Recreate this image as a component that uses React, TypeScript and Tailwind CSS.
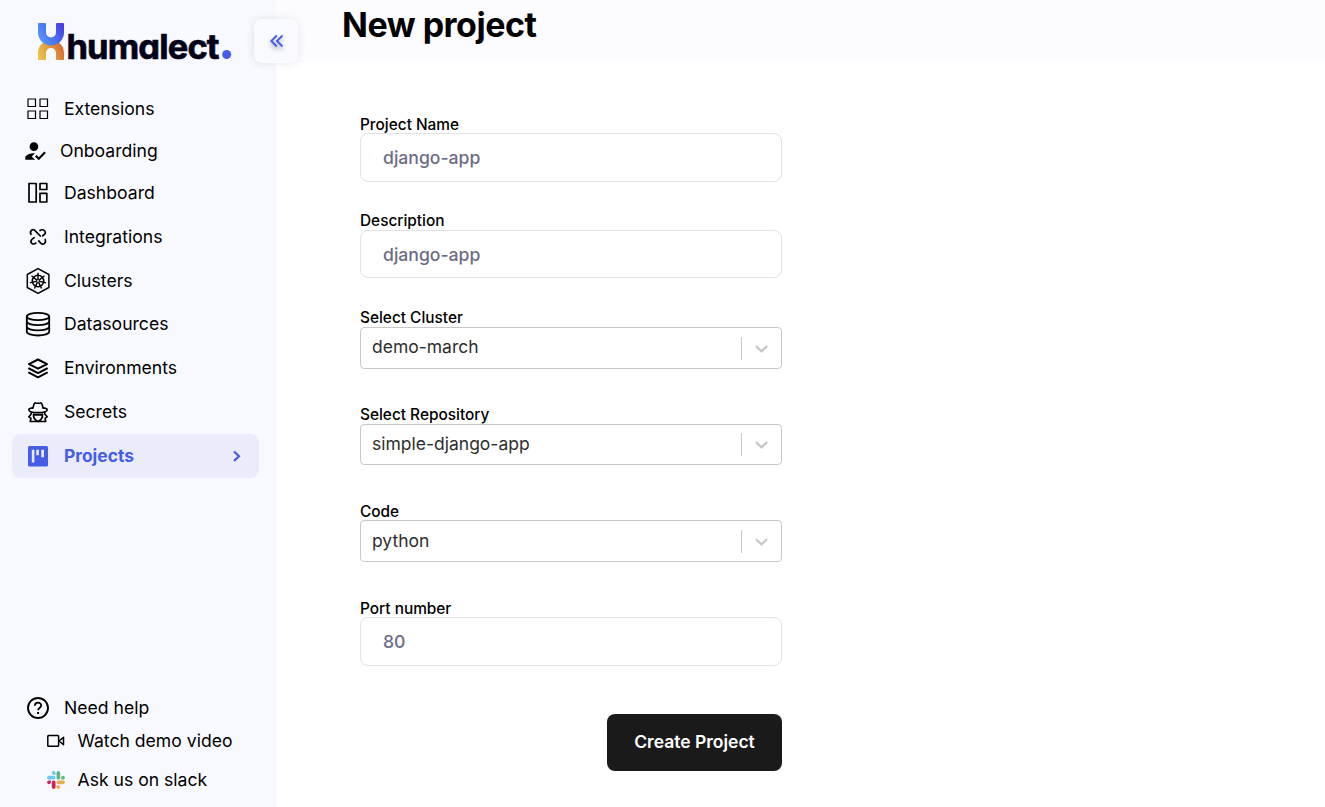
import React from "react";
import { MdHowToReg } from "react-icons/md";

type IconProps = { className?: string };

function Logo() {
  return (
    <svg width="196" height="50" viewBox="0 0 196 50" className="shrink-0 overflow-visible" aria-label="humalect">
      <defs>
        <linearGradient id="top" x1="2" y1="20" x2="28" y2="4" gradientUnits="userSpaceOnUse">
          <stop offset="0" stopColor="#5b9cf4" />
          <stop offset="0.5" stopColor="#4a72f0" />
          <stop offset="1" stopColor="#4a35e0" />
        </linearGradient>
        <linearGradient id="bottom" x1="2" y1="38" x2="28" y2="26" gradientUnits="userSpaceOnUse">
          <stop offset="0" stopColor="#edc94a" />
          <stop offset="0.5" stopColor="#e29a45" />
          <stop offset="1" stopColor="#d8682f" />
        </linearGradient>
      </defs>
      <path d="M2 38V32a13 13 0 0 1 26 0v6q0 1-1 1h-6q-1 0-1-1v-6a5 5 0 0 0-10 0v6q0 1-1 1H3q-1 0-1-1Z" fill="url(#bottom)" />
      <path d="M2 3q0-1 1-1h6q1 0 1 1v8.500a5 5 0 0 0 10 0V3q0-1 1-1h6q1 0 1 1v8.500a13 13 0 0 1-26 0Z" fill="url(#top)" />
      <text
        x="30.500"
        y="37.500"
        textLength="153"
        lengthAdjust="spacing"
        fill="#04031a"
        stroke="#04031a"
        strokeWidth="0.7"
        className="font-['Inter',sans-serif] text-[34.5px] font-bold [font-feature-settings:'cv11'_1]"
      >
        humalect
      </text>
      <circle cx="190.700" cy="33.500" r="4.500" fill="#465de8" />
    </svg>
  );
}

function Svg({ size = 24, children, className }: { size?: number; children: React.ReactNode; className?: string }) {
  return (
    <svg width={size} height={size} viewBox="0 0 24 24" fill="none" stroke="currentColor" className={className}>
      {children}
    </svg>
  );
}

function GridIcon({ className }: IconProps) {
  return (
    <Svg className={className}>
      <path strokeWidth="1.200" d="M2 2h7.500v7.500H2zM14 2h7.500v7.500H14zM2 14h7.500v7.500H2zM14 14h7.500v7.500H14z" />
    </Svg>
  );
}

function DashboardIcon({ className }: IconProps) {
  return (
    <Svg className={className}>
      <g strokeWidth="1.700" strokeLinejoin="round">
        <rect x="3" y="2.500" width="7.200" height="18.500" />
        <rect x="14" y="2.500" width="6.800" height="6" />
        <path d="M14 12.300h6.800V21H14z" />
      </g>
    </Svg>
  );
}

function IntegrationsIcon({ className }: IconProps) {
  return (
    <Svg className={className}>
      <g strokeWidth="1.700" strokeLinecap="round" strokeLinejoin="round">
        <path d="M5 9.300C3.200 6 6.800 3.100 9 5.600L14.300 11" />
        <path d="M14 5.500c2-1.500 5.500-.5 5.300 2.300-.2 1.600-1.400 2.200-2.700 3.100" />
        <path d="M8.200 12.600C6.300 13.800 4.700 15 4.900 16.800c.3 2.200 3.200 3 5 1.200" />
        <path d="M19.200 14.500c1.300 3-1.600 5.800-4.200 3.800l-2.300-2.500" />
      </g>
    </Svg>
  );
}

const SPOKES = [0, 1, 2, 3, 4, 5, 6].map((i) => {
  const a = (i * 2 * Math.PI) / 7 - Math.PI / 2;
  return { x1: 14 + 1.8 * Math.cos(a), y1: 14 + 1.8 * Math.sin(a), x2: 14 + 8.3 * Math.cos(a), y2: 14 + 8.3 * Math.sin(a) };
});

function ClusterIcon({ className }: IconProps) {
  return (
    <svg width="28" height="28" viewBox="0 0 28 28" fill="none" stroke="currentColor" className={className}>
      <path strokeWidth="1.500" strokeLinejoin="round" d="M14 1.600 24.900 7.500v13L14 26.400 3.300 20.500v-13Z" />
      <circle cx="14" cy="14" r="5.700" strokeWidth="1.600" />
      <circle cx="14" cy="14" r="1.500" strokeWidth="1.100" />
      {SPOKES.map((s, i) => (
        <line key={i} {...s} strokeWidth="1.400" />
      ))}
    </svg>
  );
}

function DatabaseIcon({ className }: IconProps) {
  return (
    <svg width="26" height="26" viewBox="0 0 26 26" fill="none" stroke="currentColor" className={className}>
      <g strokeWidth="1.800">
        <ellipse cx="13" cy="5.500" rx="11.200" ry="3.700" />
        <path d="M1.800 5.500v15.300c0 2 5 3.700 11.200 3.700s11.200-1.700 11.200-3.700V5.500" />
        <path d="M1.800 10.500c0 2 5 3.700 11.200 3.700s11.200-1.700 11.200-3.700M1.800 15.700c0 2 5 3.700 11.200 3.700s11.200-1.700 11.200-3.700" />
      </g>
    </svg>
  );
}

function LayersIcon({ className }: IconProps) {
  return (
    <Svg className={className}>
      <g strokeWidth="2" strokeLinejoin="round" strokeLinecap="round">
        <path d="m12 3.500 9 4.600-9 4.600-9-4.600Z" />
        <path d="m3 12.500 9 4.600 9-4.600" />
        <path d="m3 16.700 9 4.600 9-4.600" />
      </g>
    </Svg>
  );
}

function SpyIcon({ className }: IconProps) {
  return (
    <Svg className={className}>
      <g strokeWidth="1.600" strokeLinejoin="round" strokeLinecap="round">
        <path d="M6.800 8.300 8.200 3.800q.5-1.300 1.600-.9 2.200.7 4.400 0 1.100-.4 1.600.9l1.400 4.500" />
        <path d="M6.500 7.900C4 8.300 2.800 9 2.800 9.800c0 1.700 4 2.800 9.200 2.800s9.200-1.100 9.200-2.800c0-.8-1.200-1.500-3.700-1.900" />
        <path d="m5.300 12.300-.2 2-2.300 2.500 2.200 1.500-.8 3.200h15.600l-.8-3.200 2.200-1.500-2.300-2.500-.2-2" />
        <path d="M7.500 14c-.3 3.400 1.700 6.300 4.500 7.500 2.800-1.200 4.800-4.100 4.500-7.500" />
        <path d="M8 14.800h8" strokeWidth="1.900" />
      </g>
    </Svg>
  );
}

function BoardIcon({ className }: IconProps) {
  return (
    <Svg className={className}>
      <rect x="2" y="2" width="20" height="20.500" rx="1.500" fill="#465de8" stroke="none" />
      <path d="M5.800 5.700h2.600v12.700H5.800zM10.300 5.700h2.600v5.600h-2.600zM15.300 5.700H18v7.500h-2.700z" fill="#e9ebfc" stroke="none" />
    </Svg>
  );
}

function HelpIcon({ className }: IconProps) {
  return (
    <Svg className={className}>
      <circle cx="12" cy="12" r="10" strokeWidth="1.900" />
      <path d="M8.900 9.700c0-4 6.300-3.900 6.300-.3 0 2.400-3.100 2.600-3.100 4.900" strokeWidth="1.800" />
      <path d="M11.100 16h2v2h-2z" fill="currentColor" stroke="none" />
    </Svg>
  );
}

function VideoIcon({ className }: IconProps) {
  return (
    <svg width="18" height="14" viewBox="0 0 18 14" fill="none" stroke="currentColor" className={className}>
      <g strokeWidth="1.500" strokeLinejoin="round">
        <rect x="0.800" y="1.500" width="10.800" height="10.800" rx="0.800" />
        <path d="M12 7 16.500 3.300v7.400Z" />
      </g>
    </svg>
  );
}

function SlackIcon({ className }: IconProps) {
  return (
    <svg width="18" height="18" viewBox="0 0 127 127" className={className}>
      <path fill="#d01f54" d="M27.200 80c0 7.300-5.900 13.200-13.200 13.200S.8 87.300.8 80s5.900-13.200 13.200-13.200h13.200zm6.600 0c0-7.300 5.900-13.200 13.200-13.200s13.200 5.900 13.200 13.200v33c0 7.300-5.900 13.200-13.200 13.200s-13.200-5.900-13.200-13.200z" />
      <path fill="#6fc9ee" d="M47 27c-7.300 0-13.200-5.900-13.200-13.200S39.700.6 47 .6s13.200 5.900 13.200 13.200V27zm0 6.700c7.300 0 13.200 5.900 13.200 13.200S54.300 60.100 47 60.100H13.900C6.600 60.100.7 54.200.7 46.900s5.900-13.200 13.200-13.200z" />
      <path fill="#5fb787" d="M99.900 46.900c0-7.300 5.900-13.200 13.200-13.200s13.200 5.900 13.200 13.200-5.900 13.200-13.200 13.200H99.900zm-6.600 0c0 7.300-5.900 13.200-13.200 13.200s-13.200-5.900-13.200-13.200V13.800C66.900 6.500 72.800.6 80.100.6s13.200 5.900 13.200 13.200z" />
      <path fill="#e3b04b" d="M80.100 99.800c7.300 0 13.200 5.900 13.200 13.200s-5.900 13.200-13.200 13.200-13.200-5.900-13.200-13.200V99.800zm0-6.600c-7.300 0-13.200-5.900-13.200-13.200s5.900-13.200 13.200-13.200h33.100c7.300 0 13.200 5.900 13.200 13.200s-5.900 13.200-13.200 13.200z" />
    </svg>
  );
}

function NavItem({
  icon,
  label,
  height = "h-11",
  gap = "pl-[52px]",
  active = false,
}: {
  icon: React.ReactNode;
  label: string;
  height?: string;
  gap?: string;
  active?: boolean;
}) {
  return (
    <a
      className={`relative flex items-center rounded-lg ${gap} ${height} ${
        active ? "bg-[#eaecfb] font-bold text-[#465de8]" : "text-black"
      }`}
    >
      <span className="absolute left-[11px] top-0 flex h-full w-[30px] items-center justify-center">{icon}</span>
      <span className={active ? "text-[17.4px]" : "text-[17.6px]"}>{label}</span>
      {active && (
        <svg width="10" height="12" viewBox="0 0 10 12" className="ml-auto mr-[17px]" fill="none" stroke="currentColor" strokeWidth="2.2">
          <path d="m2 1.500 5 4.700-5 4.700" />
        </svg>
      )}
    </a>
  );
}

function Field({
  label,
  height,
  labelHeight = "h-[18px]",
  children,
}: {
  label: string;
  height: string;
  labelHeight?: string;
  children: React.ReactNode;
}) {
  return (
    <div className={height}>
      <div className={`text-[15.4px] leading-[17px] font-medium text-black ${labelHeight}`}>{label}</div>
      {children}
    </div>
  );
}

function TextBox({ value, height = "h-[49px] pt-px" }: { value: string; height?: string }) {
  return (
    <div className={`flex items-center rounded-lg border border-[#e2e2e5] bg-white px-[22px] text-[17.6px] font-medium text-[#6b6c85] ${height}`}>
      {value}
    </div>
  );
}

function SelectBox({ value, height = "h-[42px]", nudge = "-mt-[2px]" }: { value: string; height?: string; nudge?: string }) {
  return (
    <div className={`flex items-center rounded border border-[#c8c8c8] bg-white pl-[11px] text-[17.5px] text-[#2e2e2e] ${height}`}>
      <span className={`flex-1 ${nudge}`}>{value}</span>
      <span className="h-[23px] w-px bg-[#c8c8c8]" />
      <span className="flex w-[39px] justify-center pr-px">
        <svg width="21" height="21" viewBox="0 0 20 20" fill="#c8c8c8">
          <path d="M4.516 7.548c0.436-0.446 1.043-0.481 1.576 0l3.908 3.747 3.908-3.747c0.533-0.481 1.141-0.446 1.574 0 0.436 0.445 0.408 1.197 0 1.615-0.406 0.418-4.695 4.502-4.695 4.502-0.217 0.223-0.502 0.335-0.787 0.335s-0.570-0.112-0.789-0.335c0 0-4.287-4.084-4.695-4.502s-0.436-1.170 0-1.615z" />
        </svg>
      </span>
    </div>
  );
}

export default function App() {
  return (
    <div className="flex h-[807px] w-full overflow-hidden bg-white font-['Inter',sans-serif]">
      <aside className="relative flex w-[276px] shrink-0 flex-col bg-[#f8f9fe]">
        <div className="h-[88px] pl-9 pt-[21px]">
          <Logo />
        </div>
        <button className="absolute left-[254px] top-[19px] flex h-11 w-11 items-center justify-center rounded-lg bg-[#f9faff] text-[#465de8] shadow-[0_0_8px_rgba(60,60,100,0.13)]">
          <svg width="16" height="16" viewBox="0 0 16 16" fill="none" stroke="currentColor" strokeWidth="1.900" className="drop-shadow-[0_3px_2px_rgba(0,0,0,0.3)]">
            <path d="M8.800 2.500 3.300 8l5.500 5.500M14.500 2.500 9 8l5.500 5.500" />
          </svg>
        </button>
        <nav className="flex flex-col pl-3 pr-[17px]">
          <NavItem icon={<GridIcon />} label="Extensions" height="h-[42px]" />
          <NavItem icon={<MdHowToReg size={26} className="-translate-x-[3px]" />} label="Onboarding" height="h-[42px]" gap="pl-12" />
          <NavItem icon={<DashboardIcon />} label="Dashboard" height="h-[42px]" />
          <NavItem icon={<IntegrationsIcon />} label="Integrations" height="h-[45px] pt-[2px]" />
          <NavItem icon={<ClusterIcon />} label="Clusters" height="h-[43px] pt-[2px]" />
          <NavItem icon={<DatabaseIcon />} label="Datasources" />
          <NavItem icon={<LayersIcon />} label="Environments" />
          <NavItem icon={<SpyIcon />} label="Secrets" />
          <NavItem icon={<BoardIcon />} label="Projects" active />
        </nav>
        <div className="mt-auto flex flex-col text-[17.6px] text-black">
          <div className="flex h-[33px] items-center gap-[14px] pl-[26px]">
            <HelpIcon />
            <span className="pt-[2px]">Need help</span>
          </div>
          <div className="flex h-[33px] items-center gap-[12.5px] pl-[47px]">
            <VideoIcon />
            <span className="pt-[2px]">Watch demo video</span>
          </div>
          <div className="mb-[4px] flex h-[46px] items-center gap-[12.5px] pl-[47px]">
            <SlackIcon />
            Ask us on slack
          </div>
        </div>
      </aside>
      <main className="flex-1">
        <header className="h-[63px] bg-[#fcfcff] pl-[66px] pt-[5px]">
          <h1 className="text-[34px] leading-10 font-bold tracking-[-0.5px] text-black">New project</h1>
        </header>
        <form className="ml-[84px] flex w-[422px] flex-col pt-[53px]">
          <Field label="Project Name" height="h-[96px]" labelHeight="h-[17px]">
            <TextBox value="django-app" />
          </Field>
          <Field label="Description" height="h-[97px]">
            <TextBox value="django-app" height="h-12 pt-[3px]" />
          </Field>
          <Field label="Select Cluster" height="h-[97px]">
            <SelectBox value="demo-march" />
          </Field>
          <Field label="Select Repository" height="h-[97px]">
            <SelectBox value="simple-django-app" height="h-[41px]" nudge="mt-0" />
          </Field>
          <Field label="Code" height="h-[97px]" labelHeight="h-[17px]">
            <SelectBox value="python" nudge="mt-0" />
          </Field>
          <Field label="Port number" height="h-[114px]" labelHeight="h-[17px]">
            <TextBox value="80" />
          </Field>
          <button type="button" className="flex h-[57px] w-[175px] items-center justify-center self-end rounded-lg bg-[#1a1a1a] pb-px text-[17.5px] font-semibold text-white">
            Create Project
          </button>
        </form>
      </main>
    </div>
  );
}
